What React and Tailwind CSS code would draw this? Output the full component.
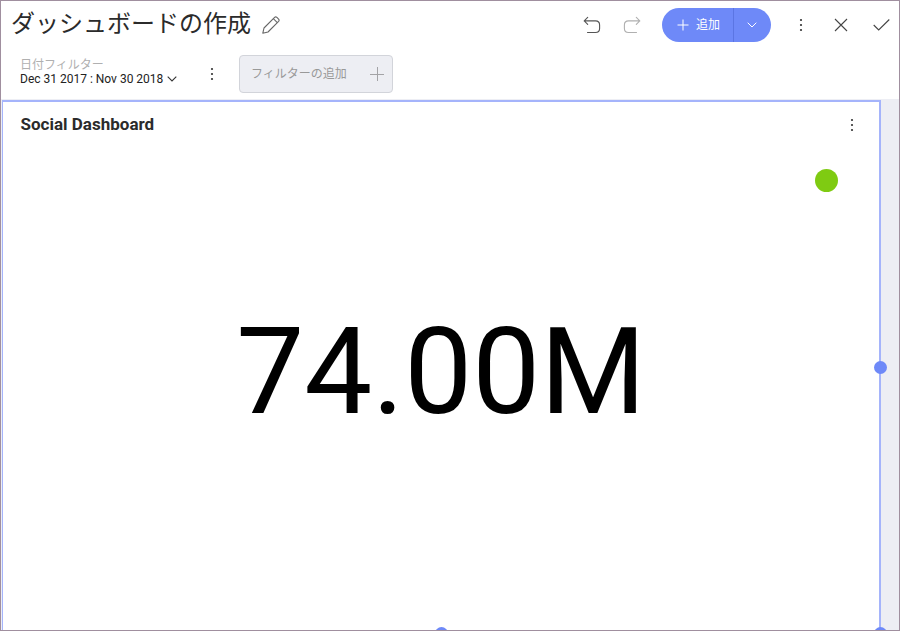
import React from 'react';

function Dots({ className = '' }) {
  return (
    <svg className={className} width="4" height="14" viewBox="0 0 4 14" fill="#333333">
      <circle cx="2" cy="2" r="1.1" />
      <circle cx="2" cy="7" r="1.1" />
      <circle cx="2" cy="12" r="1.1" />
    </svg>
  );
}

function Pencil() {
  return (
    <svg className="mt-[15px] ml-[10px] shrink-0" width="18" height="18" viewBox="0 0 18 18" fill="none" stroke="#666666" strokeWidth="1.100" strokeLinejoin="round">
      <path d="M.8 17.2 2 12 12.600 1.400Q13.700.4 14.900 1.400L16.600 3.100Q17.600 4.300 16.600 5.400L6 16Z" />
      <path d="M11.300 2.700l4 4" />
    </svg>
  );
}

function Undo() {
  return (
    <svg width="18" height="18" viewBox="0 0 18 18" fill="none" stroke="currentColor" strokeWidth="1.1" strokeLinecap="round" strokeLinejoin="round">
      <path d="M4.700 1.400 1.200 4.900l3.500 3.500M1.200 4.900H12.500Q16.600 4.900 16.600 9V12.500Q16.600 16.500 12.500 16.500H4.500" />
    </svg>
  );
}

function Header() {
  return (
    <div className="flex h-[48px] shrink-0 items-start">
      <h1 className="ml-[10px] mt-[5px] h-9 w-[241px] whitespace-nowrap text-[24px] leading-9 text-[#2b2b2b]">ダッシュボードの作成</h1>
      <Pencil />
      <div className="ml-auto flex h-[48px] items-center">
        <span className="text-[#555555]"><Undo /></span>
        <span className="ml-[22px] -scale-x-100 text-[#b0b0b0]"><Undo /></span>
        <div className="ml-[21px] flex h-[34px] w-[109px] overflow-hidden rounded-full bg-[#6e89f8] text-white">
          <div className="flex w-[72px] items-center border-r border-[#5b75e3] pl-[15px]">
            <svg width="12" height="12" viewBox="0 0 12 12" stroke="currentColor" strokeWidth="1"><path d="M.5 6h11M6 .5v11" /></svg>
            <span className="ml-[7px] text-[12px] leading-[18px]">追加</span>
          </div>
          <div className="flex flex-1 items-center justify-center pr-px">
            <svg width="10" height="6" viewBox="0 0 10 6" fill="none" stroke="currentColor" strokeWidth="1"><path d="m.7.7 4.300 4.300L9.300.7" /></svg>
          </div>
        </div>
        <Dots className="ml-[28px]" />
        <svg className="ml-[31px]" width="14" height="14" viewBox="0 0 14 14" fill="none" stroke="#444444" strokeWidth="1.100"><path d="m1 1 12 12M13 1 1 13" /></svg>
        <svg className="ml-[25px] mr-[9px]" width="17" height="14" viewBox="0 0 17 14" fill="none" stroke="#444444" strokeWidth="1.100"><path d="m.7 7 5 5L16.300 1.500" /></svg>
      </div>
    </div>
  );
}

function Filters() {
  return (
    <div className="flex h-[50px] shrink-0 items-start">
      <div className="ml-[19px] mt-[7px] w-[158px] shrink-0">
        <div className="h-[16px] text-[12px] leading-[18px] text-[#b0b0b0]">日付フィルター</div>
        <div className="flex h-[14px] items-center whitespace-nowrap text-[12px] leading-[14px] text-[#222222]">
          <span>Dec 31 2017 : Nov 30 2018</span>
          <svg className="ml-[4px] shrink-0" width="10" height="6" viewBox="0 0 10 6" fill="none" stroke="#333333" strokeWidth="1.100"><path d="m.7.7 4.300 4.300L9.300.7" /></svg>
        </div>
      </div>
      <Dots className="ml-[32px] mt-[18px] shrink-0" />
      <div className="ml-[25px] mt-[6px] flex h-[38px] w-[154px] items-center rounded-[4px] border border-[#d2d4da] bg-[#edeef3] pl-[11px] text-[12px] text-[#999999]">
        <span>フィルターの追加</span>
        <svg className="ml-auto mr-[8px]" width="14" height="14" viewBox="0 0 14 14" stroke="#a3a3a6" strokeWidth="1"><path d="M0 7.500h14M7.500 0v14" /></svg>
      </div>
    </div>
  );
}

export default function App() {
  return (
    <div className="flex h-[631px] w-[900px] flex-col overflow-hidden border border-[#a08f9f] bg-white font-[Roboto,'Noto_Sans_CJK_JP',sans-serif]">
      <Header />
      <Filters />
      <div className="flex min-h-0 flex-1 items-start overflow-hidden bg-[#edeef4]">
        <div className="relative ml-[1px] mt-[1px] flex h-[534px] w-[879px] shrink-0 flex-col border-2 border-l border-[#a5b4fb] bg-white">
          <div className="flex h-[45px] items-center justify-between pl-[17.5px] pr-[25px]">
            <h2 className="text-[17px] font-bold tracking-[0.01px] text-[#2b2b2b]">Social Dashboard</h2>
            <Dots />
          </div>
          <div className="mr-[41px] mt-[22px] size-[23px] self-end rounded-full bg-[#7fcb12]" />
          <div className="mt-[109px] text-center text-[121px] leading-[142px] text-black">74.00M</div>
          <div className="absolute -right-[8px] top-[258.500px] size-[13px] rounded-full bg-[#6e89f8]" />
          <div className="absolute left-[432px] top-[525px] size-[13px] rounded-full bg-[#6e89f8]" />
          <div className="absolute -right-[8px] top-[525px] size-[13px] rounded-full bg-[#6e89f8]" />
        </div>
      </div>
    </div>
  );
}
